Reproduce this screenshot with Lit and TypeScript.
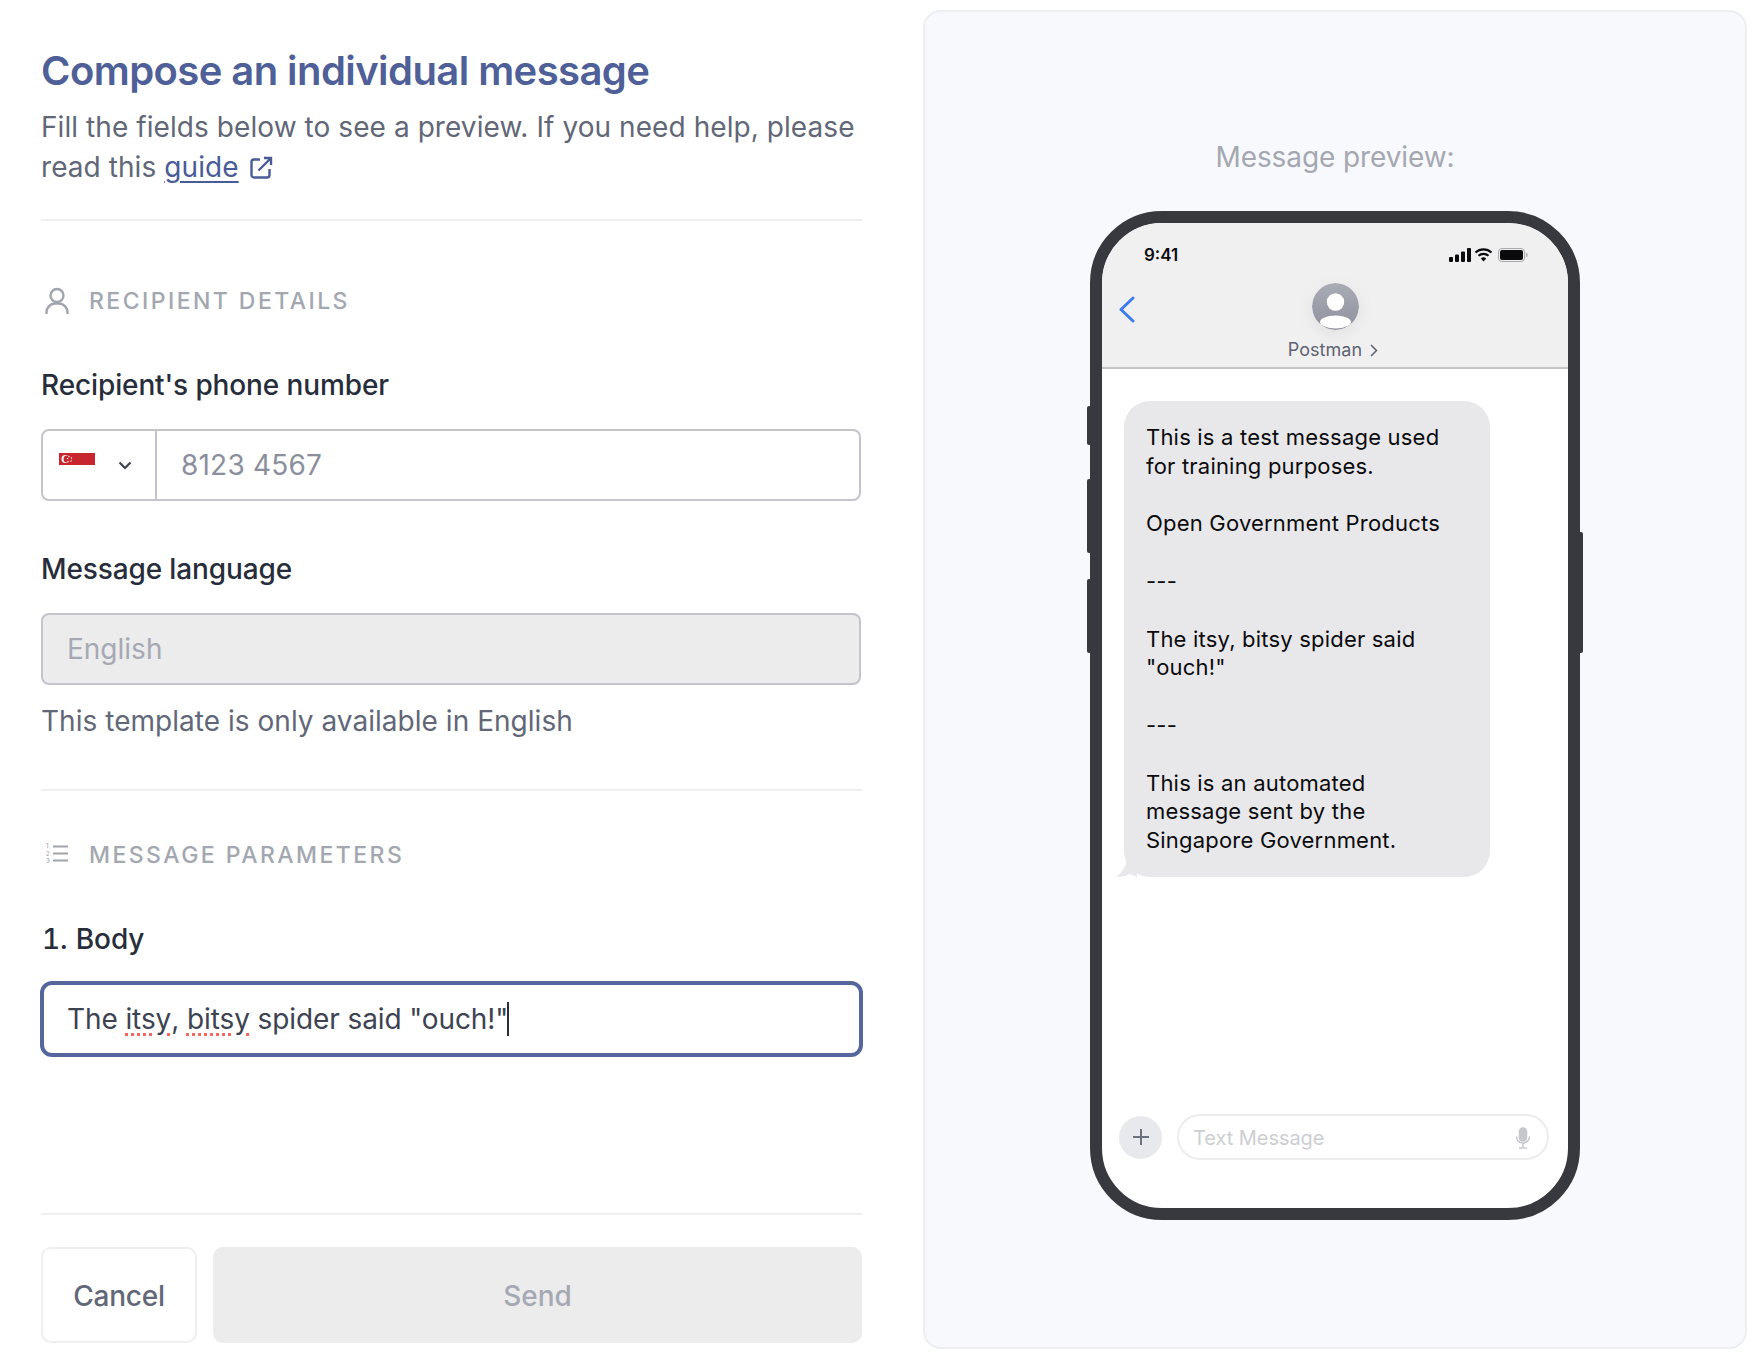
import { LitElement, html, css } from "lit";
import { customElement } from "lit/decorators.js";

@customElement("app-root")
export class AppRoot extends LitElement {
  static styles = css`
    :host { display: block; width: 1759px; height: 1359px; background: #fff; font-family: Inter, "Liberation Sans", sans-serif; color: #626777; overflow: hidden; }
    * { box-sizing: border-box; }
    .page { display: flex; height: 1359px; }
    .left { width: 923px; padding: 46px 61px 0 41px; flex: none; }
    h1 { margin: 0; font-size: 40px; line-height: 50px; font-weight: 600; color: #4f5f97; letter-spacing: -0.57px; }
    .intro { margin: 11px 0 0; font-size: 28px; line-height: 40px; letter-spacing: 0.07px; }
    .intro a { color: #4a5c98; text-decoration: underline; text-underline-offset: 4px; text-decoration-thickness: 2px; }
    .ext { vertical-align: -3px; margin-left: 10px; }
    .rule { height: 2px; background: #eeeff1; }
    .r1 { margin-top: 32px; }
    .r2 { margin-top: 48px; }
    .r3 { margin-top: 156px; }
    .section { display: flex; align-items: center; gap: 16px; height: 32px; font-size: 23px; letter-spacing: 2.45px; color: #a3a7b0; font-weight: 500; }
    .s1 { margin-top: 64px; }
    .s2 { margin-top: 48px; }
    .label { font-size: 28px; line-height: 40px; font-weight: 500; color: #272d3a; margin-top: 48px; letter-spacing: -0.12px; }
    .num { font-variant-numeric: tabular-nums; word-spacing: 1px; padding-left: 1px; }
    .field { height: 72px; margin: 24px 1px 0 0; border: 2px solid #c3c4cc; border-radius: 8px; display: flex; align-items: center; font-size: 28px; }
    .select { width: 114px; height: 100%; border-right: 2px solid #c3c4cc; display: flex; padding: 22px 0 0 16px; flex: none; gap: 23px; }
    .select .chev { margin-top: 8px; }
    .ph { padding-left: 24px; color: #8b8f9b; letter-spacing: 0.2px; }
    .disabled { background: #ececed; padding-left: 24px; color: #a6a9b3; }
    .help { margin-top: 16px; font-size: 28px; line-height: 40px; letter-spacing: 0.03px; }
    .focus { height: 76px; margin-top: 22px; border: 4px solid #54669c; border-radius: 12px; padding-left: 23px; display: flex; align-items: center; font-size: 28px; color: #3d4351; letter-spacing: -0.1px; margin-left: -1px; margin-right: -1px; white-space: pre; }
    .sp { text-decoration: underline dotted #f2685e 3px; text-underline-offset: 4px; }
    .caret { display: inline-block; width: 2px; height: 34px; margin-left: -1.500px; background: #272d3a; }
    .actions { display: flex; gap: 16px; margin-top: 32px; }
    .btn { height: 96px; border-radius: 10px; display: flex; align-items: center; justify-content: center; font-size: 28px; font-weight: 500; padding-top: 1px; }
    .cancel { width: 156px; border: 2px solid #eeeff1; letter-spacing: -0.2px; }
    .send { flex: 1; background: #ececed; color: #a6a9b3; }

    .panel { width: 824px; height: 1339px; margin-top: 10px; flex: none; border: 2px solid #eeeff3; border-radius: 18px; background: #f8f9fd; display: flex; flex-direction: column; align-items: center; padding-top: 125px; }
    .preview { font-size: 28px; line-height: 40px; color: #a5a8b1; letter-spacing: -0.1px; }
    .phone { position: relative; width: 490px; height: 1009px; margin-top: 34px; flex: none; }
    .sidebtn { position: absolute; width: 6px; background: #38383f; border-radius: 2px; }
    .screen { position: relative; width: 100%; height: 100%; border: 12px solid #38383f; border-radius: 72px; background: #fff; overflow: hidden; display: flex; flex-direction: column; }
    .head { height: 146px; background: #f0f0f0; border-bottom: 2px solid #c4c4c6; display: flex; flex-direction: column; padding: 21px 40px 0 42px; flex: none; }
    .status { display: flex; justify-content: space-between; align-items: center; height: 22px; font-size: 17px; font-weight: 600; color: #0b0b0d; }
    .nav { position: relative; display: flex; flex-direction: column; align-items: center; margin: 17px 2px 0 0; }
    .back { position: absolute; left: -25px; top: 13px; }
    .avatar { border-radius: 50%; box-shadow: 0 4px 18px rgba(0,0,0,.07); display: block; }
    .contact { display: flex; align-items: center; gap: 8px; margin: 9px 4px 0 0; font-size: 18px; line-height: 22px; color: #5f6371; letter-spacing: 0.05px; }
    .body { flex: 1; padding: 32px 0 0 22px; }
    .bubble { position: relative; width: 366px; padding: 22px 22px; border-radius: 26px; background: #e8e8ea; font-size: 22px; line-height: 28.8px; letter-spacing: 0.2px; color: #0b0b0d; white-space: pre; }
    .tail { position: absolute; left: -9px; bottom: 0; }
    .composer { display: flex; align-items: center; gap: 15px; padding: 0 0 48px 17px; flex: none; }
    .plus { width: 43px; height: 43px; border-radius: 50%; background: #e8e9ec; display: flex; align-items: center; justify-content: center; flex: none; }
    .input { width: 372px; height: 46px; border: 2px solid #ecedef; border-radius: 23px; display: flex; align-items: center; justify-content: space-between; padding: 1px 16px 0 14px; font-size: 20px; letter-spacing: -0.05px; color: #cdced3; }
  `;

  render() {
    const msg = `This is a test message used
for training purposes.

Open Government Products

---

The itsy, bitsy spider said
"ouch!"

---

This is an automated
message sent by the
Singapore Government.`;
    return html`<div class="page">
      <div class="left">
        <h1>Compose an individual message</h1>
        <p class="intro"><span>Fill the fields below to see a preview. If you need help, please</span><br /><span>read this </span><a>guide</a><svg class="ext" width="24" height="24" viewBox="0 0 24 24" fill="none" stroke="#4a5c98" stroke-width="2.400"><path d="M11 3.500H5a2.500 2.500 0 0 0-2.500 2.500v13A2.500 2.500 0 0 0 5 21.500h13a2.500 2.500 0 0 0 2.500-2.500v-6"/><path d="M9.500 14.500L22 2M15 2h7v7"/></svg></p>
        <div class="rule r1"></div>
        <div class="section s1">
          <svg width="32" height="32" viewBox="0 0 32 32" fill="none" stroke="#a0a4ad" stroke-width="2.4"><circle cx="16" cy="10.500" r="6.500"/><path d="M5.500 29v-1.500c0-5 4-9 8.500-9h4c4.500 0 8.500 4 8.500 9V29"/></svg>
          RECIPIENT DETAILS
        </div>
        <div class="label">Recipient's phone number</div>
        <div class="field">
          <div class="select">
            <svg width="36" height="24" viewBox="0 0 36 24"><rect width="36" height="12" fill="#c8262f"/><rect y="12" width="36" height="12" fill="#fff"/><circle cx="6.500" cy="6" r="4" fill="#fff"/><circle cx="8" cy="6" r="3.500" fill="#c8262f"/><g fill="#fff"><circle cx="10" cy="3.500" r=".7"/><circle cx="12.500" cy="5" r=".7"/><circle cx="12" cy="8" r=".7"/><circle cx="9" cy="8.500" r=".7"/><circle cx="8.500" cy="5.500" r=".7"/></g></svg>
            <svg class="chev" width="14" height="9" viewBox="0 0 14 9" fill="none" stroke="#3d4351" stroke-width="2.200"><path d="M1.500 1.500L7 7l5.500-5.500"/></svg>
          </div>
          <div class="ph">8123 4567</div>
        </div>
        <div class="label">Message language</div>
        <div class="field disabled">English</div>
        <div class="help">This template is only available in English</div>
        <div class="rule r2"></div>
        <div class="section s2">
          <svg width="32" height="32" viewBox="0 0 32 32"><g fill="#a0a4ad" font-family="Inter, sans-serif" font-size="6"><text x="5" y="9">1</text><text x="5" y="17">2</text><text x="5" y="24">3</text></g><path d="M12 7.500h15M12 14.500h15M12 21.500h15" stroke="#a0a4ad" stroke-width="2.200"/></svg>
          MESSAGE PARAMETERS
        </div>
        <div class="label num">1. Body</div>
        <div class="focus">The <span class="sp">itsy</span>, <span class="sp">bitsy</span> spider said "ouch!"<span class="caret"></span></div>
        <div class="rule r3"></div>
        <div class="actions">
          <div class="btn cancel">Cancel</div>
          <div class="btn send">Send</div>
        </div>
      </div>
      <div class="panel">
        <div class="preview">Message preview:</div>
        <div class="phone">
          <div class="sidebtn" style="left:-3px;top:195px;height:39px"></div>
          <div class="sidebtn" style="left:-3px;top:268px;height:74px"></div>
          <div class="sidebtn" style="left:-3px;top:368px;height:74px"></div>
          <div class="sidebtn" style="right:-3px;top:321px;height:121px"></div>
          <div class="screen">
            <div class="head">
              <div class="status">
                <span>9:41</span>
                <svg width="79" height="14" viewBox="0 0 79 14">
                  <g fill="#0b0b0d"><rect x="0" y="9" width="4" height="5" rx="1"/><rect x="6" y="6.500" width="4" height="7.500" rx="1"/><rect x="12" y="3.500" width="4" height="10.500" rx="1"/><rect x="18" y="0" width="4" height="14" rx="1"/></g>
                  <g fill="none" stroke="#0b0b0d" stroke-width="2.200"><path d="M26.500 4.500a12 12 0 0 1 16 0"/><path d="M29.500 7.800a7.500 7.500 0 0 1 10 0"/></g>
                  <path d="M31.800 10.500a4 4 0 0 1 5.400 0L34.500 13.500z" fill="#0b0b0d"/>
                  <rect x="49.500" y=".5" width="26" height="13" rx="3.500" fill="none" stroke="#a9a9ab"/>
                  <rect x="51" y="2" width="23" height="10" rx="2" fill="#0b0b0d"/>
                  <rect x="77" y="5" width="1.500" height="4" rx=".7" fill="#a9a9ab"/>
                </svg>
              </div>
              <div class="nav">
                <svg class="back" width="16" height="27" viewBox="0 0 16 27" fill="none" stroke="#3f7bf0" stroke-width="3" stroke-linecap="round" stroke-linejoin="round"><path d="M14 2L2 13.500 14 25"/></svg>
                <svg class="avatar" width="47" height="47" viewBox="0 0 47 47">
                  <defs>
                    <linearGradient id="g" x1="0" y1="0" x2="0" y2="1"><stop offset="0" stop-color="#a9abb5"/><stop offset="1" stop-color="#8f929e"/></linearGradient>
                    <clipPath id="c"><circle cx="23.500" cy="23.500" r="23.500"/></clipPath>
                  </defs>
                  <circle cx="23.500" cy="23.500" r="23.500" fill="url(#g)"/>
                  <circle cx="23.500" cy="19" r="8.700" fill="#fff"/>
                  <ellipse cx="23.500" cy="39" rx="15.500" ry="6.500" fill="#fff" clip-path="url(#c)"/>
                </svg>
                <div class="contact">Postman <svg width="8" height="13" viewBox="0 0 8 13" fill="none" stroke="#5f6371" stroke-width="1.500"><path d="M1 1l5.500 5.500L1 12"/></svg></div>
              </div>
            </div>
            <div class="body">
              <div class="bubble">${msg}<svg class="tail" width="22" height="20" viewBox="0 0 22 20"><path d="M12 0c0 8-4 15-11 20 6 0 10-1 14-3l7 3V0z" fill="#e8e8ea"/></svg></div>
            </div>
            <div class="composer">
              <div class="plus"><svg width="18" height="18" viewBox="0 0 18 18" stroke="#6d717d" stroke-width="2"><path d="M9 1v16M1 9h16"/></svg></div>
              <div class="input">
                <span>Text Message</span>
                <svg width="16" height="22" viewBox="0 0 16 22" fill="none" stroke="#c6c8ce" stroke-width="1.600"><rect x="4.500" y="1" width="7" height="13" rx="3.500" fill="#c6c8ce"/><path d="M1.500 9.500c0 3.800 2.800 6.500 6.500 6.500s6.500-2.700 6.500-6.500M8 16v4M4 21h8"/></svg>
              </div>
            </div>
          </div>
        </div>
      </div>
    </div>`;
  }
}
